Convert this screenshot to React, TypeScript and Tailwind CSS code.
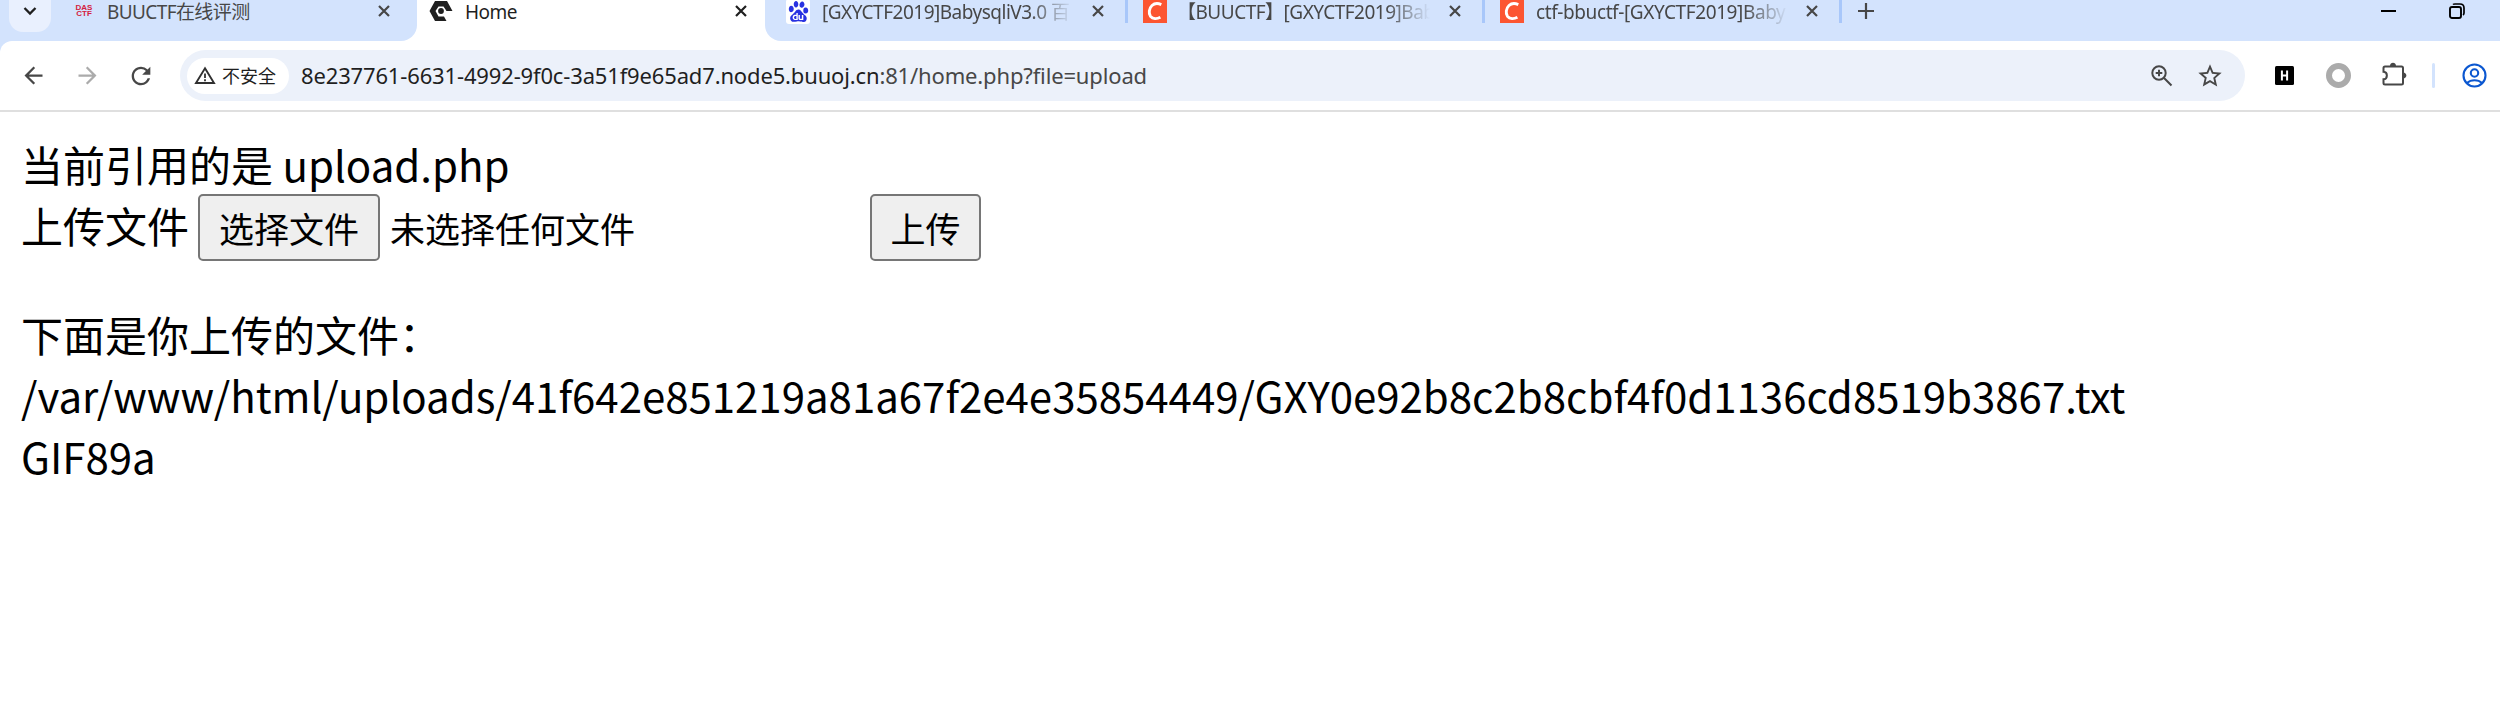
import type { ReactNode } from "react";
import {
  MdArrowBack,
  MdArrowForward,
  MdRefresh,
  MdStarBorder,
} from "react-icons/md";
import { SiBaidu } from "react-icons/si";

function CloseIcon({ active = false }: { active?: boolean }) {
  return (
    <svg width="12" height="12" viewBox="0 0 12 12" className={active ? "shrink-0 text-[#1f1f1f]" : "shrink-0 text-[#474747]"}>
      <path d="M1 1 11 11M11 1 1 11" stroke="currentColor" strokeWidth="2.2" fill="none" />
    </svg>
  );
}

function DasLogo() {
  return (
    <div className="flex h-3 w-[18px] shrink-0 flex-col text-center font-['Liberation_Sans'] text-[8px] leading-[6px] font-bold text-[#d4213f]">
      <span>DAS</span>
      <span>CTF</span>
    </div>
  );
}

function HomeLogo() {
  return (
    <svg width="24" height="22" viewBox="0 0 24 22" className="shrink-0">
      <path d="M6 1H18L23.5 11H17.5L14.5 6.5H9.5L6.5 11 9.5 16.5H15L17.5 21H6L0.5 11Z" fill="#1f1f1f" />
      <circle cx="12" cy="11" r="2.9" fill="#1f1f1f" />
    </svg>
  );
}

function BaiduLogo() {
  return (
    <span className="flex h-[25px] w-6 shrink-0 items-center justify-center rounded-[3px] bg-white">
      <SiBaidu size={21} color="#2932e1" />
    </span>
  );
}

function CsdnLogo() {
  return (
    <svg width="24" height="24" viewBox="0 0 24 24" className="shrink-0">
      <path d="M0 0H24V24H0Z" fill="#fc5531" />
      <path d="M18.3 5.6C15 4.1 11.500 4.2 9 6.500C6 9.3 5.4 14.500 7.500 17.300C9.700 20 14 20 17.400 18.200" stroke="#fff" strokeWidth="2.900" fill="none" />
    </svg>
  );
}

function Title({ children, className }: { children: ReactNode; className: string }) {
  return (
    <span className={`block shrink-0 self-start overflow-hidden text-[19px] leading-[24px] whitespace-nowrap ${className}`}>
      {children}
    </span>
  );
}

function Separator() {
  return <span className="h-[23px] w-[3px] shrink-0 self-start bg-[#a8c7fa]" />;
}

const fade = "[mask-image:linear-gradient(to_right,#000_calc(100%-44px),transparent)]";

function TabStrip() {
  return (
    <div className="flex h-[41px] bg-white text-[#474747]">
      <div className="flex h-[41px] w-[417px] shrink-0 rounded-br-[16px] bg-[#d3e3fd] pl-[9px]">
        <div className="flex h-8 w-[42px] shrink-0 justify-center rounded-b-[14px] bg-[#e9f0fe] pt-[6px]">
          <svg width="14" height="10" viewBox="0 0 14 10">
            <path d="M1.500 2 7 7.500 12.500 2" stroke="#1f1f1f" strokeWidth="2.300" fill="none" />
          </svg>
        </div>
        <div className="flex h-[22px] items-center">
          <span className="w-6 shrink-0" />
          <DasLogo />
          <Title className="ml-[14px] w-[271px] tracking-[-0.6px]">BUUCTF在线评测</Title>
          <CloseIcon />
        </div>
      </div>
      <div className="flex h-[22px] w-[348px] shrink-0 items-center pl-3">
        <HomeLogo />
        <Title className="ml-3 w-[270px] tracking-[-0.5px] text-[#1f1f1f]">Home</Title>
        <CloseIcon active />
      </div>
      <div className="h-[41px] grow rounded-bl-[16px] bg-[#d3e3fd]">
        <div className="flex h-[22px] items-center pl-[21px]">
          <BaiduLogo />
          <Title className={`ml-3 w-[251px] tracking-[-0.5px] ${fade}`}>[GXYCTF2019]BabysqliV3.0 百</Title>
          <span className="w-[19px] shrink-0" />
          <CloseIcon />
          <span className="w-[21px] shrink-0" />
          <Separator />
          <span className="w-[15px] shrink-0" />
          <CsdnLogo />
          <Title className={`ml-[10px] w-[253px] tracking-[-0.5px] ${fade}`}>【BUUCTF】[GXYCTF2019]Bab</Title>
          <span className="w-[19px] shrink-0" />
          <CloseIcon />
          <span className="w-[21px] shrink-0" />
          <Separator />
          <span className="w-[15px] shrink-0" />
          <CsdnLogo />
          <Title className={`ml-3 w-[252px] tracking-[-0.4px] ${fade}`}>ctf-bbuctf-[GXYCTF2019]Baby</Title>
          <span className="w-[18px] shrink-0" />
          <CloseIcon />
          <span className="w-[21px] shrink-0" />
          <Separator />
          <svg width="16" height="16" viewBox="0 0 16 16" className="ml-4 shrink-0">
            <path d="M8 0V16M0 8H16" stroke="#474747" strokeWidth="2.200" />
          </svg>
          <span className="grow" />
          <span className="h-[2px] w-[15px] shrink-0 bg-black" />
          <svg width="16" height="16" viewBox="0 0 16 16" className="mr-[35px] ml-[53px] shrink-0">
            <rect x="1" y="4" width="11" height="11" rx="2" fill="none" stroke="#000" strokeWidth="1.900" />
            <path d="M4 1.500C4.500 1 5 1 6 1H11C13.500 1 15 2.500 15 5V10C15 11 14.800 11.500 14 12" stroke="#000" strokeWidth="1.700" fill="none" />
          </svg>
        </div>
      </div>
    </div>
  );
}

function Toolbar() {
  return (
    <div className="bg-[#d3e3fd]">
      <div className="flex h-[71px] items-center rounded-tl-[12px] border-b-2 border-[#dfdfdf] bg-white">
        <MdArrowBack size={27} color="#474747" className="ml-5 shrink-0" />
        <MdArrowForward size={27} color="#ababab" className="ml-[27px] shrink-0" />
        <MdRefresh size={28} color="#474747" className="ml-[26px] shrink-0" />
        <div className="ml-[25px] flex h-[51px] w-[2065px] shrink-0 items-center rounded-full bg-[#ecf1fa] pl-[7px]">
          <div className="flex h-9 w-[102px] shrink-0 items-center rounded-full bg-white pl-[7px]">
            <svg width="22" height="19" viewBox="0 0 22 19" className="shrink-0">
              <path d="M11 2.300 20 17H2Z" stroke="#303030" strokeWidth="1.900" fill="none" />
              <path d="M11 7.500V12M11 13.300V15.200" stroke="#303030" strokeWidth="1.800" />
            </svg>
            <span className="ml-[6px] text-[18px] leading-6 whitespace-nowrap text-[#1f1f1f]">不安全</span>
          </div>
          <span className="ml-3 w-[1849px] shrink-0 pb-px text-[22px] leading-[30px] tracking-[-0.15px] whitespace-nowrap text-[#474747]">
            <span className="text-[#1f1f1f]">8e237761-6631-4992-9f0c-3a51f9e65ad7.node5.buuoj.cn</span>:81/home.php?file=upload
          </span>
          <svg width="22" height="22" viewBox="0 0 22 22" className="ml-px shrink-0">
            <circle cx="8" cy="8" r="6.700" stroke="#474747" strokeWidth="2" fill="none" />
            <path d="M12.800 12.800 20.500 20.500M8 4.700V11.300M4.700 8H11.300" stroke="#474747" strokeWidth="2" />
          </svg>
          <MdStarBorder size={28} color="#474747" className="ml-[23px] shrink-0" />
        </div>
        <svg width="19" height="19" viewBox="0 0 19 19" className="ml-[30px] shrink-0">
          <rect width="19" height="19" rx="1.500" fill="#000" />
          <path d="M6.900 4.500V14.500M12.100 4.500V14.500M6.900 9.500H12.100" stroke="#fff" strokeWidth="2" />
        </svg>
        <span className="ml-8 h-[25px] w-[25px] shrink-0 rounded-full border-[6px] border-[#ababab]" />
        <svg width="25" height="24" viewBox="0 0 25 24" className="mb-[3px] ml-[31px] shrink-0">
          <path d="M3 4.500H19.500Q21 4.500 21 6V21Q21 22.500 19.500 22.500H3Q1.500 22.500 1.500 21V17.300C6 17 6 10 1.500 9.700V6Q1.500 4.500 3 4.500Z" stroke="#474747" strokeWidth="2" fill="none" />
          <path d="M8 4C8 -0.300 14 -0.300 14 4ZM21 10.500C25.500 10.500 25.500 16.500 21 16.500Z" fill="#474747" />
        </svg>
        <span className="ml-[25px] h-[25px] w-[3px] shrink-0 rounded-full bg-[#d3e3fd]" />
        <svg width="25" height="25" viewBox="0 0 25 25" className="ml-[27px] shrink-0">
          <circle cx="12.500" cy="12.500" r="11" stroke="#0b57d0" strokeWidth="2.100" fill="none" />
          <circle cx="12.500" cy="10" r="3.700" stroke="#0b57d0" strokeWidth="2.100" fill="none" />
          <path d="M5 20C9 16.300 16 16.300 20 20" stroke="#0b57d0" strokeWidth="2.100" fill="none" />
        </svg>
      </div>
    </div>
  );
}

export default function App() {
  return (
    <div className="h-[710px] w-[2500px] overflow-hidden bg-white font-['Noto_Sans','Noto_Sans_CJK_SC',sans-serif]">
      <TabStrip />
      <Toolbar />
      <main className="px-[21px] pt-[21px] font-['Noto_Sans_CJK_SC',sans-serif] text-[42px] leading-[61px] text-black">
        <p>当前引用的是 upload.php</p>
        <form className="flex h-[67px] items-start">
          <span className="w-[177px] shrink-0 whitespace-nowrap">上传文件</span>
          <button type="button" className="h-[67px] w-[182px] shrink-0 rounded-[5px] border-2 border-[#767676] bg-[#efefef] text-[35px] leading-[63px]">
            选择文件
          </button>
          <span className="ml-[10px] w-[480px] shrink-0 text-[35px] leading-[67px]">未选择任何文件</span>
          <button type="button" className="h-[67px] w-[111px] shrink-0 rounded-[5px] border-2 border-[#767676] bg-[#efefef] text-[35px] leading-[63px]">
            上传
          </button>
        </form>
        <p className="mt-[42px]">下面是你上传的文件：</p>
        <p className="tracking-[-0.015px]">/var/www/html/uploads/41f642e851219a81a67f2e4e35854449/GXY0e92b8c2b8cbf4f0d1136cd8519b3867.txt</p>
        <p>GIF89a</p>
      </main>
    </div>
  );
}
